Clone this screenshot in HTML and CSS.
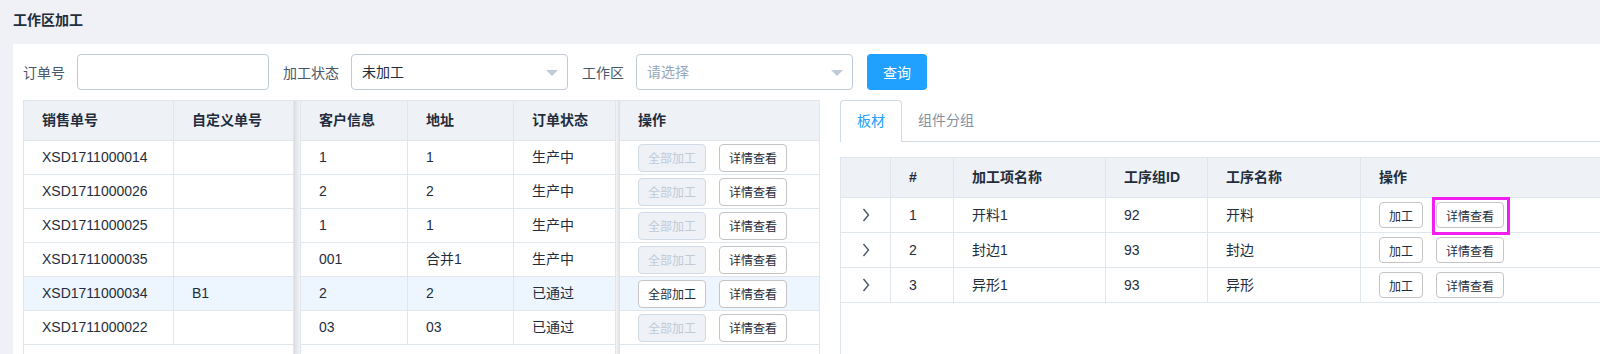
FILE: index.html
```html
<!DOCTYPE html>
<html lang="zh-CN">
<head>
    <meta charset="UTF-8">
    <title>工作区加工</title>
    <link rel="stylesheet" href="styles.css">
</head>
<body>
    <div class="page">
        <div class="page-title">工作区加工</div>
        <div class="panel">
            <form class="filter">
                <label>订单号</label>
                <input type="text" class="input">
                <label>加工状态</label>
                <div class="select"><span>未加工</span><i class="caret"></i></div>
                <label>工作区</label>
                <div class="select placeholder"><span>请选择</span><i class="caret"></i></div>
                <button type="button" class="btn-primary">查询</button>
            </form>

            <div class="split">
                <div class="orders">
                    <div class="fixed-left">
                        <table class="tbl">
                            <thead>
                                <tr><th class="c-sale br"><div class="cell">销售单号</div></th><th><div class="cell">自定义单号</div></th></tr>
                            </thead>
                            <tbody>
                                <tr><td class="br"><div class="cell">XSD1711000014</div></td><td><div class="cell"></div></td></tr>
                                <tr><td class="br"><div class="cell">XSD1711000026</div></td><td><div class="cell"></div></td></tr>
                                <tr><td class="br"><div class="cell">XSD1711000025</div></td><td><div class="cell"></div></td></tr>
                                <tr><td class="br"><div class="cell">XSD1711000035</div></td><td><div class="cell"></div></td></tr>
                                <tr class="current"><td class="br"><div class="cell">XSD1711000034</div></td><td><div class="cell">B1</div></td></tr>
                                <tr><td class="br"><div class="cell">XSD1711000022</div></td><td><div class="cell"></div></td></tr>
                            </tbody>
                        </table>
                    </div>
                    <div class="shade shade-r"></div>
                    <div class="main">
                        <table class="tbl">
                            <thead>
                                <tr>
                                    <th class="c-cust br"><div class="cell">客户信息</div></th>
                                    <th class="c-addr br"><div class="cell">地址</div></th>
                                    <th><div class="cell">订单状态</div></th>
                                </tr>
                            </thead>
                            <tbody>
                                <tr><td class="br"><div class="cell">1</div></td><td class="br"><div class="cell">1</div></td><td><div class="cell">生产中</div></td></tr>
                                <tr><td class="br"><div class="cell">2</div></td><td class="br"><div class="cell">2</div></td><td><div class="cell">生产中</div></td></tr>
                                <tr><td class="br"><div class="cell">1</div></td><td class="br"><div class="cell">1</div></td><td><div class="cell">生产中</div></td></tr>
                                <tr><td class="br"><div class="cell">001</div></td><td class="br"><div class="cell">合并1</div></td><td><div class="cell">生产中</div></td></tr>
                                <tr class="current"><td class="br"><div class="cell">2</div></td><td class="br"><div class="cell">2</div></td><td><div class="cell">已通过</div></td></tr>
                                <tr><td class="br"><div class="cell">03</div></td><td class="br"><div class="cell">03</div></td><td><div class="cell">已通过</div></td></tr>
                            </tbody>
                        </table>
                    </div>
                    <div class="shade shade-l"></div>
                    <div class="fixed-right">
                        <table class="tbl">
                            <thead>
                                <tr><th><div class="cell op-head">操作</div></th></tr>
                            </thead>
                            <tbody>
                                <tr><td><div class="cell ops"><button type="button" class="btn is-disabled">全部加工</button><button type="button" class="btn">详情查看</button></div></td></tr>
                                <tr><td><div class="cell ops"><button type="button" class="btn is-disabled">全部加工</button><button type="button" class="btn">详情查看</button></div></td></tr>
                                <tr><td><div class="cell ops"><button type="button" class="btn is-disabled">全部加工</button><button type="button" class="btn">详情查看</button></div></td></tr>
                                <tr><td><div class="cell ops"><button type="button" class="btn is-disabled">全部加工</button><button type="button" class="btn">详情查看</button></div></td></tr>
                                <tr class="current"><td><div class="cell ops"><button type="button" class="btn">全部加工</button><button type="button" class="btn">详情查看</button></div></td></tr>
                                <tr><td><div class="cell ops"><button type="button" class="btn is-disabled">全部加工</button><button type="button" class="btn">详情查看</button></div></td></tr>
                            </tbody>
                        </table>
                    </div>
                </div>

                <div class="detail">
                    <div class="tabs">
                        <div class="tab active">板材</div>
                        <div class="tab">组件分组</div>
                    </div>
                    <div class="grid-wrap">
                        <table class="tbl grid">
                            <thead>
                                <tr>
                                    <th class="c-exp br"><div class="cell"></div></th>
                                    <th class="c-no br"><div class="cell">#</div></th>
                                    <th class="c-name br"><div class="cell">加工项名称</div></th>
                                    <th class="c-gid br"><div class="cell">工序组ID</div></th>
                                    <th class="c-proc br"><div class="cell">工序名称</div></th>
                                    <th><div class="cell">操作</div></th>
                                </tr>
                            </thead>
                            <tbody>
                                <tr>
                                    <td class="br"><div class="cell expand"><svg width="8" height="14" viewBox="0 0 8 14"><path d="M1.5 1 L6.5 7 L1.5 13" fill="none" stroke="#48576a" stroke-width="1.4"/></svg></div></td>
                                    <td class="br"><div class="cell">1</div></td>
                                    <td class="br"><div class="cell">开料1</div></td>
                                    <td class="br"><div class="cell">92</div></td>
                                    <td class="br"><div class="cell">开料</div></td>
                                    <td><div class="cell ops"><button type="button" class="btn sm">加工</button><span class="marked"><button type="button" class="btn sm">详情查看</button><i class="mark"></i></span></div></td>
                                </tr>
                                <tr>
                                    <td class="br"><div class="cell expand"><svg width="8" height="14" viewBox="0 0 8 14"><path d="M1.5 1 L6.5 7 L1.5 13" fill="none" stroke="#48576a" stroke-width="1.4"/></svg></div></td>
                                    <td class="br"><div class="cell">2</div></td>
                                    <td class="br"><div class="cell">封边1</div></td>
                                    <td class="br"><div class="cell">93</div></td>
                                    <td class="br"><div class="cell">封边</div></td>
                                    <td><div class="cell ops"><button type="button" class="btn sm">加工</button><button type="button" class="btn sm">详情查看</button></div></td>
                                </tr>
                                <tr>
                                    <td class="br"><div class="cell expand"><svg width="8" height="14" viewBox="0 0 8 14"><path d="M1.5 1 L6.5 7 L1.5 13" fill="none" stroke="#48576a" stroke-width="1.4"/></svg></div></td>
                                    <td class="br"><div class="cell">3</div></td>
                                    <td class="br"><div class="cell">异形1</div></td>
                                    <td class="br"><div class="cell">93</div></td>
                                    <td class="br"><div class="cell">异形</div></td>
                                    <td><div class="cell ops"><button type="button" class="btn sm">加工</button><button type="button" class="btn sm">详情查看</button></div></td>
                                </tr>
                            </tbody>
                        </table>
                    </div>
                </div>
            </div>
        </div>
    </div>
</body>
</html>
```

FILE: styles.css
```css
body {
    margin: 0;
    background: #eff1f6;
    font-family: "Liberation Sans", "Noto Sans CJK SC", sans-serif;
    font-size: 14px;
    color: #1f2d3d;
    overflow: hidden;
}

.page {
    padding-left: 13px;
}

.page-title {
    height: 44px;
    line-height: 40px;
    font-weight: bold;
}

.panel {
    background: #fff;
    padding: 10px 0 0 10px;
    height: 300px;
}

/* filter bar */
.filter {
    display: flex;
    align-items: center;
    height: 36px;
    margin: 0;
}

.filter label {
    color: #48576a;
    margin-right: 12px;
}

.input {
    width: 192px;
    height: 36px;
    box-sizing: border-box;
    border: 1px solid #bfcbd9;
    border-radius: 4px;
    margin: 0 14px 0 0;
}

.select {
    position: relative;
    width: 217px;
    height: 36px;
    box-sizing: border-box;
    border: 1px solid #bfcbd9;
    border-radius: 4px;
    padding-left: 10px;
    line-height: 34px;
    margin-right: 14px;
}

.select.placeholder {
    color: #97a8be;
}

.caret {
    position: absolute;
    right: 9px;
    top: 15px;
    border-left: 6px solid transparent;
    border-right: 6px solid transparent;
    border-top: 6px solid #bfcbd9;
}

.btn-primary {
    width: 60px;
    height: 36px;
    border: none;
    border-radius: 4px;
    background: #20a0ff;
    color: #fff;
    font-family: inherit;
    font-size: 14px;
    padding: 0;
}

.split {
    display: flex;
    margin-top: 10px;
    gap: 20px;
}

/* orders table */
.orders {
    display: flex;
    flex: none;
    width: 797px;
    height: 254px;
    box-sizing: border-box;
    border: 1px solid #dfe6ec;
    border-bottom: none;
}

.fixed-left {
    width: 270px;
    border-right: 1px solid #dfe6ec;
    box-sizing: border-box;
}

.main {
    width: 316px;
    border-left: 1px solid #dfe6ec;
    border-right: 1px solid #dfe6ec;
    box-sizing: border-box;
}

.fixed-right {
    flex: 1;
}

.shade-r {
    width: 6px;
    background: linear-gradient(to right, #dadde2, #f3f4f6);
}

.shade-l {
    width: 4px;
    background: linear-gradient(to right, #f3f4f6, #dcdfe3);
}

.tbl {
    width: 100%;
    border-collapse: separate;
    border-spacing: 0;
    table-layout: fixed;
}

.tbl th,
.tbl td {
    padding: 0;
    text-align: left;
    box-sizing: border-box;
    border-bottom: 1px solid #dfe6ec;
}

.tbl th {
    background: #eef1f6;
    font-weight: bold;
}

.tbl .br {
    border-right: 1px solid #dfe6ec;
}

.tbl .cell {
    height: 33px;
    line-height: 33px;
    padding: 0 18px;
    white-space: nowrap;
}

.tbl th .cell {
    height: 39px;
    line-height: 39px;
}

.tbl tr.current td {
    background: #edf6fe;
}

.c-sale { width: 150px; }
.c-cust { width: 107px; }
.c-addr { width: 106px; }

.op-head {
    padding-left: 19px;
}

.cell.ops {
    display: flex;
    align-items: center;
    gap: 13px;
}

.btn {
    height: 28px;
    padding: 0 9px;
    border: 1px solid #c4c4c4;
    border-radius: 4px;
    background: #fff;
    color: #1f2d3d;
    font-family: inherit;
    font-size: 12px;
}

.btn.is-disabled {
    background: #eef1f6;
    border-color: #d1dbe5;
    color: #bfcbd9;
}

.btn.sm {
    height: 26px;
}

/* detail side */
.detail {
    flex: none;
    width: 800px;
}

.tabs {
    display: flex;
    align-items: flex-start;
    height: 41px;
    border-bottom: 1px solid #d1dbe5;
}

.tab {
    padding: 0 16px;
    line-height: 41px;
    color: #8391a5;
}

.tab.active {
    position: relative;
    height: 42px;
    box-sizing: border-box;
    line-height: 40px;
    color: #20a0ff;
    background: #fff;
    border: 1px solid #d1dbe5;
    border-bottom: none;
    border-radius: 4px 4px 0 0;
}

.grid-wrap {
    margin-top: 15px;
    height: 196px;
    border-left: 1px solid #dfe6ec;
    border-top: 1px solid #dfe6ec;
}

.grid .cell {
    height: 34px;
    line-height: 34px;
}

.grid .cell.expand {
    display: flex;
    justify-content: center;
    align-items: center;
    padding: 0;
}

.c-exp { width: 50px; }
.c-no { width: 63px; }
.c-name { width: 152px; }
.c-gid { width: 102px; }
.c-proc { width: 153px; }

.marked {
    position: relative;
    display: flex;
}

.mark {
    position: absolute;
    left: -4px;
    right: -6px;
    top: -5px;
    bottom: -7px;
    border: 3px solid #f01ef0;
}
```
